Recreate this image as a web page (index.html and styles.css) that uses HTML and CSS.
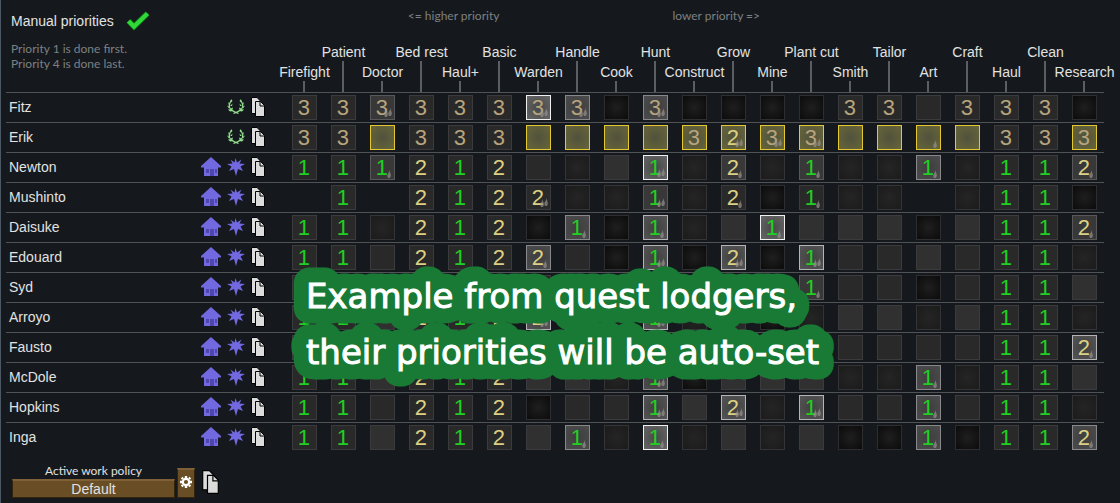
FILE: index.html
```html
<!DOCTYPE html>
<html lang="en">
<head>
<meta charset="utf-8">
<title>Work priorities</title>
<link rel="stylesheet" href="styles.css">
</head>
<body>
<svg class="sprites" aria-hidden="true">
  <symbol id="icon-copy" viewBox="0 0 14 20">
    <path d="M.5.5h5.5l3.500 3.500v12.500h-9z" fill="#dcdcdc" stroke="#000"/>
    <path d="M4.500 4.500h5l4 4v11h-9z" fill="#dcdcdc" stroke="#000"/>
    <path d="M9 4.500v4.500h4.500" fill="none" stroke="#000"/>
  </symbol>
  <symbol id="icon-house" viewBox="0 0 20 20">
    <path d="M10 0L20 9v1.500h-3V19H3v-8.500H0V9z" fill="#7268e0"/>
    <path d="M5 12h3v4H5zM14 12h2v4h-2zM9 12h4v7H9z" fill="#5047ae"/>
  </symbol>
  <symbol id="icon-star" viewBox="0 0 18 18">
    <path d="M8.500 0L10 4.500 14.500 1.500 12.500 5.500 18 6 13.500 8.500 16 13 11 11 9 18 7 11 2 13 4.500 8.500 0 6 5.500 5.500 3.500 1.500 7.500 4.500z" fill="#7268e0"/>
  </symbol>
  <symbol id="icon-laurel" viewBox="0 0 18 16">
    <path d="M4.500 1Q0 7.500 4.500 11 7 13 11.500 14.500M13.500 1Q18 7.500 13.500 11 11 13 6.500 14.500" fill="none" stroke="#93e08c" stroke-width="1.200"/>
    <path d="M4 0l1.500 2-2 2zM1 3l2 2-1 1.500zM5.500 4.500L5 7 3 7zM0 6.500l3 1.500-1 1.500zM6 8.500L5.500 10.500 3.500 9.500zM1 10.500l4-.5 1 2-3 .5zM14 0l-1.500 2 2 2zM17 3l-2 2 1 1.500zM12.500 4.500L13 7l2 0zM18 6.500l-3 1.500 1 1.500zM12 8.500l.5 2 2-1zM17 10.500l-4-.5-1 2 3 .5z" fill="#93e08c"/>
  </symbol>
  <symbol id="icon-flame" viewBox="0 0 5 10">
    <path d="M3.500 0Q2.800 3 1 5Q-.5 8 1.500 10H3.500Q5.500 8 4.500 5Q3.500 3 3.500 0z"/>
  </symbol>
</svg>

<main class="window">
  <div class="board">
    <table class="work">
      <colgroup><col class="col-name"><col class="col-job" span="21"></colgroup>
      <thead>
        <tr class="hint-row">
          <td class="corner" rowspan="2">
            <div class="options">
              <label class="manual" for="manual">Manual priorities
                <span class="tick">
                  <input type="checkbox" id="manual" checked>
                  <svg viewBox="0 0 24 20" aria-hidden="true"><path d="M2.500 10L8 15.500 21.500 2.500" fill="none" stroke="#0c5a14" stroke-width="6"/><path d="M2.500 10L8 15.500 21.500 2.500" fill="none" stroke="#2fd838" stroke-width="4.500"/></svg>
                </span>
              </label>
              <p class="note">Priority 1 is done first.<br>Priority 4 is done last.</p>
            </div>
          </td>
          <td colspan="21"><div class="hints"><span>&lt;= higher priority</span><span>lower priority =&gt;</span></div></td>
        </tr>
        <tr class="jobs" id="jobs"></tr>
      </thead>
      <tbody id="pawns"></tbody>
    </table>

    <svg class="banner" viewBox="0 0 560 130">
      <g class="halo"><use href="#line-a"/><use href="#line-b"/></g>
      <g class="letters">
        <text id="line-a" x="16" y="46">Example from quest lodgers,</text>
        <text id="line-b" x="16" y="102">their priorities will be auto-set</text>
      </g>
    </svg>
  </div>

  <footer class="policy">
    <div class="policy-pick">
      <label for="policy">Active work policy</label>
      <button class="wood" id="policy" type="button">Default</button>
    </div>
    <button class="wood gear" type="button" aria-label="Manage policies">
      <svg viewBox="-6 -6 12 12" aria-hidden="true"><circle r="3.200" fill="none" stroke="#fff" stroke-width="2.200"/><path d="M0-6V-4M0 4V6M-6 0H-4M4 0H6M-4.300-4.300L-3-3M3 3L4.300 4.300M-4.300 4.300L-3 3M3-3L4.300-4.300" stroke="#fff" stroke-width="2.400"/></svg>
    </button>
    <button class="plain" type="button" aria-label="Copy policy"><svg class="copy-large" aria-hidden="true"><use href="#icon-copy"/></svg></button>
  </footer>
</main>
<script src="script.js"></script>
</body>
</html>
```

FILE: styles.css
```css
* { box-sizing: border-box; }

body {
  margin: 0;
  min-height: 100vh;
  background: #15191d;
  color: #e2e2e2;
  font: 14px/20px "Liberation Sans", Arial, sans-serif;
}

button {
  margin: 0;
  padding: 0;
  border: 0;
  background: none;
  color: inherit;
  font: inherit;
}

.sprites { display: none; }

.window {
  min-height: 100vh;
  padding: 0 16px 0 5px;
  border-left: 1px solid #4b5763;
}

.board { position: relative; }

.work {
  width: 100%;
  table-layout: fixed;
  border-collapse: separate;
  border-spacing: 0;
}

.work td, .work th { padding: 0; font-weight: normal; }
.col-job { width: 39px; }

/* header */
.hint-row { height: 30px; }
.corner { vertical-align: top; }
.options { padding: 9px 0 0 5px; }
.manual { display: flex; align-items: center; gap: 12px; height: 24px; }
.tick { display: grid; width: 24px; height: 20px; }
.tick input, .tick svg { grid-area: 1 / 1; width: 24px; height: 20px; margin: 0; }
.tick input { appearance: none; }
.tick svg { pointer-events: none; }

.note, .hints {
  color: #7d8083;
  font: 12px/15px Lato, sans-serif;
}
.note { margin: 8px 0 0; }
.hints { display: flex; justify-content: space-between; padding: 0 42% 0 15%; }

.jobs { height: 62px; }
.jobs th { vertical-align: bottom; }
.job { display: flex; flex-direction: column; align-items: center; white-space: nowrap; line-height: 18px; }
.job::after { content: ""; width: 2px; height: 11px; background: #5b5e62; }
th:nth-child(even) .job::after { height: 31px; }

/* rows */
.work tbody th, .work tbody td { height: 30px; border-top: 1px solid #505356; }
.pawn { display: flex; align-items: center; gap: 6px; padding: 0 20px 2px 3px; text-align: left; }
.name { flex: 1; }
.pawn svg, .plain svg { display: block; }
.plain { display: block; }
.house { width: 20px; height: 20px; }
.star { width: 18px; height: 18px; }
.laurel { width: 18px; height: 16px; }
.copy { width: 14px; height: 20px; }

.cell {
  position: relative;
  display: block;
  width: 25px;
  height: 25px;
  margin: 0 auto;
  padding-right: 1px;
  border: 1px solid #3b3b3d;
  background: #292929;
  font-size: 22px;
  line-height: 23px;
  text-align: center;
}
.cell-k { border-color: #2e2e31; background: radial-gradient(#1f1f1f, #0b0b0b); }
.cell-d { border-color: #343437; background: radial-gradient(#252525, #1b1b1b); }
.cell-g { background: #303030; }
.cell-p { border-color: #58585b; background: #383839; }
.cell-q { border-color: #88888b; background: radial-gradient(#3e3e3e, #4c4c4e); }
.cell-r { border-color: #b4b4b6; background: radial-gradient(#404040, #555557); }
.cell-w { border-color: #f0f0f0; background: radial-gradient(#484848, #666668); }
.cell-y { border-color: #e4c832; background: radial-gradient(#50523c, #68653a); }

.level-1 { color: #1fd023; }
.level-2 { color: #ddd083; }
.level-3 { color: #b8a47d; }

.flames { position: absolute; right: 3px; bottom: 1px; display: flex; align-items: flex-end; }
.flames svg { width: 4px; height: 8px; fill: #96918b; opacity: .7; }
.flames-2 { right: 2px; }
.flames-2 svg { height: 10px; }
.flames-2 svg:last-child { height: 12px; }

/* announcement over the grid */
.banner { position: absolute; top: 262px; left: 284px; width: 560px; height: 130px; pointer-events: none; }
.banner text { font: 34px "DejaVu Sans", Verdana, sans-serif; }
.halo { fill: #187a34; stroke: #187a34; stroke-width: 31px; stroke-linejoin: round; }
.letters { fill: #fff; stroke: #fff; stroke-width: 1px; }

/* policy bar */
.policy { display: flex; align-items: flex-end; gap: 2px; padding: 11px 0 0 6px; }
.policy-pick { display: flex; flex-direction: column; width: 163px; }
.policy-pick label { color: #e0e0e0; font: 12px/16px Lato, sans-serif; text-align: center; }
.wood {
  height: 19px;
  border: 1px solid #33240f;
  border-top: 2px solid #806036;
  background: #694e25;
  line-height: 15px;
}
.gear { display: grid; place-items: center; width: 18px; height: 30px; padding-bottom: 3px; }
.gear svg { display: block; width: 12px; height: 12px; }
.policy .plain { margin: 0 0 4px 5px; }
.copy-large { width: 17px; height: 24px; }
```

FILE: script.js
```javascript
const jobs = ["Firefight", "Patient", "Doctor", "Bed rest", "Haul+", "Basic", "Warden", "Handle", "Cook", "Hunt",
  "Construct", "Grow", "Mine", "Plant cut", "Smith", "Tailor", "Art", "Craft", "Haul", "Clean", "Research"];

// Each cell: priority (or .), shade letter, number of passion flames. "-" is a disabled job.
const pawns = [
  ["Fitz", "3m 3m 3p2 3m 3m 3m 3w2 3q2 .k 3q2 .k .k .k .k 3m 3m .m 3m 3m 3m .k"],
  ["Erik", "3m 3m .y 3m 3m 3m .y .y .y .y 3y 2y2 3y2 3y2 .y .y .y1 .y 3m 3m 3y"],
  ["Newton", "1m 1m 1p1 2m 1m 2m .m .d .g 1w2 .d 2p1 .d 1p1 .d .d 1q1 .d 1m 1m 2p1"],
  ["Mushinto", "- 1m - 2m 1m 2m 2m2 .d .d 1p2 .d 2m1 .k 1m1 .d .d - .d 1m 1m .k"],
  ["Daisuke", "1m 1m .d 2m 1m 2m .k 1q1 .k 1r1 .d .g 1w1 .g .g .g .k .g 1m 1m 2p1"],
  ["Edouard", "1m 1m .m 2m 1m 2m 2q1 .m .k 1r2 .k 2r2 .k 1r2 .m .m .g .m 1m 1m .d"],
  ["Syd", ".m .m .m .m .m .m .m .m .d .p .d .m .w 1p1 .m .m .k .m 1m 1m .g"],
  ["Arroyo", "1m 1m .g 2m 1m 2m 2r2 .r .d 1r2 .d .m .k .d .g .g .d .g 1m 1m .d"],
  ["Fausto", ".m .m .m .m .m .m .m .m .m .p .m .m .m .m .m .m .m .m 1m 1m 2r1"],
  ["McDole", "1m 1m .g 2m 1m 2m .g .g .d 1q2 .k .g .g .g .d .d 1q1 .d 1m 1m .g"],
  ["Hopkins", "1m 1m .m 2m 1m 2m .k .m .m 1r2 .g 2r2 .d 1r2 .m .m 1q1 .m 1m 1m .d"],
  ["Inga", "1m 1m .g 2m 1m 2m .g 1q1 .d 1w1 .d .g .d .g .k .k 1q1 .k 1m 1m 2q1"]
];

const icon = (name, cls) => `<svg class="${cls}" aria-hidden="true"><use href="#icon-${name}"/></svg>`;

function cell(code, pawn, job) {
  if (code === "-") return "<td></td>";
  const [level, shade, flames = 0] = code;
  const digit = level === "." ? "" : level;
  const passion = +flames ? `<span class="flames flames-${flames}">${icon("flame", "flame").repeat(+flames)}</span>` : "";
  return `<td><button type="button" class="cell cell-${shade} level-${digit || 0}" aria-label="${pawn}, ${job}: ${digit || "off"}">${digit}${passion}</button></td>`;
}

document.getElementById("jobs").innerHTML =
  jobs.map(job => `<th scope="col"><div class="job">${job}</div></th>`).join("");

document.getElementById("pawns").innerHTML = pawns.map(([name, codes], row) => {
  const badges = row < 2 ? icon("laurel", "laurel") : icon("house", "house") + icon("star", "star");
  const copy = `<button type="button" class="plain" aria-label="Copy ${name}">${icon("copy", "copy")}</button>`;
  const cells = codes.split(" ").map((code, i) => cell(code, name, jobs[i])).join("");
  return `<tr><th scope="row"><div class="pawn"><span class="name">${name}</span>${badges}${copy}</div></th>${cells}</tr>`;
}).join("");
```
